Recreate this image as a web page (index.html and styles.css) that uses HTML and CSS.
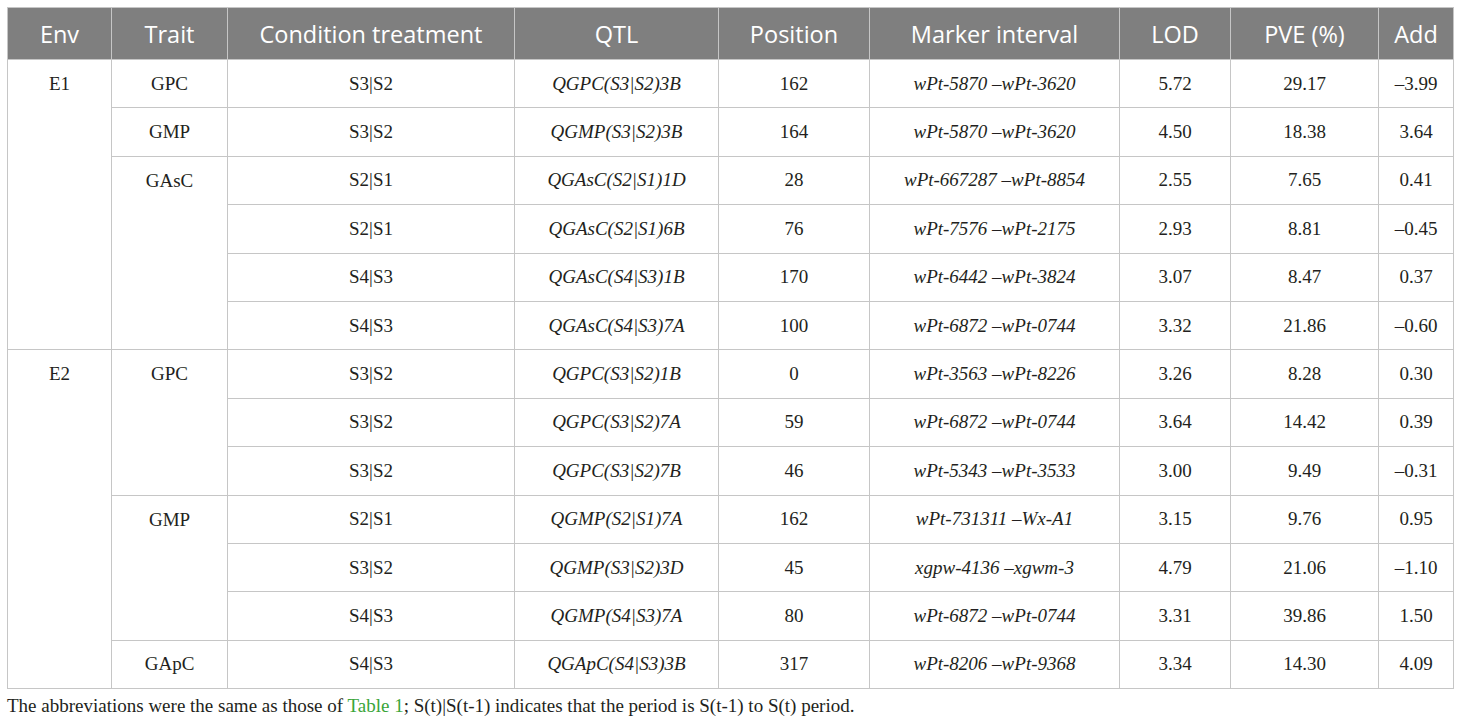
FILE: index.html
```html
<!DOCTYPE html>
<html>
<head>
<meta charset="utf-8">
<link rel="stylesheet" href="styles.css">
</head>
<body>
<div class="page">
<table class="qtl">
<colgroup>
<col class="c-env"><col class="c-trait"><col class="c-cond"><col class="c-qtl"><col class="c-pos"><col class="c-mark"><col class="c-lod"><col class="c-pve"><col class="c-add">
</colgroup>
<thead>
<tr><th>Env</th><th>Trait</th><th>Condition treatment</th><th>QTL</th><th>Position</th><th>Marker interval</th><th>LOD</th><th>PVE (%)</th><th>Add</th></tr>
</thead>
<tbody>
<tr><td rowspan="6" class="top">E1</td><td>GPC</td><td>S3|S2</td><td class="it">QGPC(S3|S2)3B</td><td>162</td><td class="it">wPt-5870 –wPt-3620</td><td>5.72</td><td>29.17</td><td>–3.99</td></tr>
<tr><td>GMP</td><td>S3|S2</td><td class="it">QGMP(S3|S2)3B</td><td>164</td><td class="it">wPt-5870 –wPt-3620</td><td>4.50</td><td>18.38</td><td>3.64</td></tr>
<tr><td rowspan="4" class="top">GAsC</td><td>S2|S1</td><td class="it">QGAsC(S2|S1)1D</td><td>28</td><td class="it">wPt-667287 –wPt-8854</td><td>2.55</td><td>7.65</td><td>0.41</td></tr>
<tr><td>S2|S1</td><td class="it">QGAsC(S2|S1)6B</td><td>76</td><td class="it">wPt-7576 –wPt-2175</td><td>2.93</td><td>8.81</td><td>–0.45</td></tr>
<tr><td>S4|S3</td><td class="it">QGAsC(S4|S3)1B</td><td>170</td><td class="it">wPt-6442 –wPt-3824</td><td>3.07</td><td>8.47</td><td>0.37</td></tr>
<tr><td>S4|S3</td><td class="it">QGAsC(S4|S3)7A</td><td>100</td><td class="it">wPt-6872 –wPt-0744</td><td>3.32</td><td>21.86</td><td>–0.60</td></tr>
<tr><td rowspan="7" class="top">E2</td><td rowspan="3" class="top">GPC</td><td>S3|S2</td><td class="it">QGPC(S3|S2)1B</td><td>0</td><td class="it">wPt-3563 –wPt-8226</td><td>3.26</td><td>8.28</td><td>0.30</td></tr>
<tr><td>S3|S2</td><td class="it">QGPC(S3|S2)7A</td><td>59</td><td class="it">wPt-6872 –wPt-0744</td><td>3.64</td><td>14.42</td><td>0.39</td></tr>
<tr><td>S3|S2</td><td class="it">QGPC(S3|S2)7B</td><td>46</td><td class="it">wPt-5343 –wPt-3533</td><td>3.00</td><td>9.49</td><td>–0.31</td></tr>
<tr><td rowspan="3" class="top">GMP</td><td>S2|S1</td><td class="it">QGMP(S2|S1)7A</td><td>162</td><td class="it">wPt-731311 –Wx-A1</td><td>3.15</td><td>9.76</td><td>0.95</td></tr>
<tr><td>S3|S2</td><td class="it">QGMP(S3|S2)3D</td><td>45</td><td class="it">xgpw-4136 –xgwm-3</td><td>4.79</td><td>21.06</td><td>–1.10</td></tr>
<tr><td>S4|S3</td><td class="it">QGMP(S4|S3)7A</td><td>80</td><td class="it">wPt-6872 –wPt-0744</td><td>3.31</td><td>39.86</td><td>1.50</td></tr>
<tr><td>GApC</td><td>S4|S3</td><td class="it">QGApC(S4|S3)3B</td><td>317</td><td class="it">wPt-8206 –wPt-9368</td><td>3.34</td><td>14.30</td><td>4.09</td></tr>
</tbody>
</table>
<p class="note">The abbreviations were the same as those of <a class="link">Table 1</a>; S(t)|S(t-1) indicates that the period is S(t-1) to S(t) period.</p>
</div>
</body>
</html>
```

FILE: styles.css
```css
html, body {
  margin: 0;
  padding: 0;
  background: #ffffff;
}
.page {
  padding: 7px 7px 0 7px;
}
.qtl {
  border-collapse: collapse;
  table-layout: fixed;
  width: 1446px;
  font-family: "Liberation Serif", "DejaVu Serif", serif;
  font-size: 19px;
  color: #231f20;
}
.c-env { width: 104px; }
.c-trait { width: 116px; }
.c-cond { width: 287px; }
.c-qtl { width: 204px; }
.c-pos { width: 151px; }
.c-mark { width: 250px; }
.c-lod { width: 111px; }
.c-pve { width: 148px; }
.c-add { width: 75px; }
.qtl th {
  background: #7f7f7f;
  color: #ffffff;
  font-family: "Open Sans", "Noto Sans", sans-serif;
  font-weight: 400;
  font-size: 23.5px;
  height: 51px;
  padding: 0;
  border: 1px solid #c6c6c6;
  text-align: center;
  vertical-align: middle;
}
.qtl td {
  height: 47.4px;
  padding: 0;
  border: 1px solid #c6c6c6;
  text-align: center;
  vertical-align: middle;
}
.qtl td.top {
  vertical-align: top;
  padding-top: 13px;
}
.qtl td.it {
  font-style: italic;
}
.note {
  margin: 6px 0 0 0;
  font-family: "Liberation Serif", "DejaVu Serif", serif;
  font-size: 19px;
  color: #231f20;
}
.link {
  color: #3aa53a;
}
```
